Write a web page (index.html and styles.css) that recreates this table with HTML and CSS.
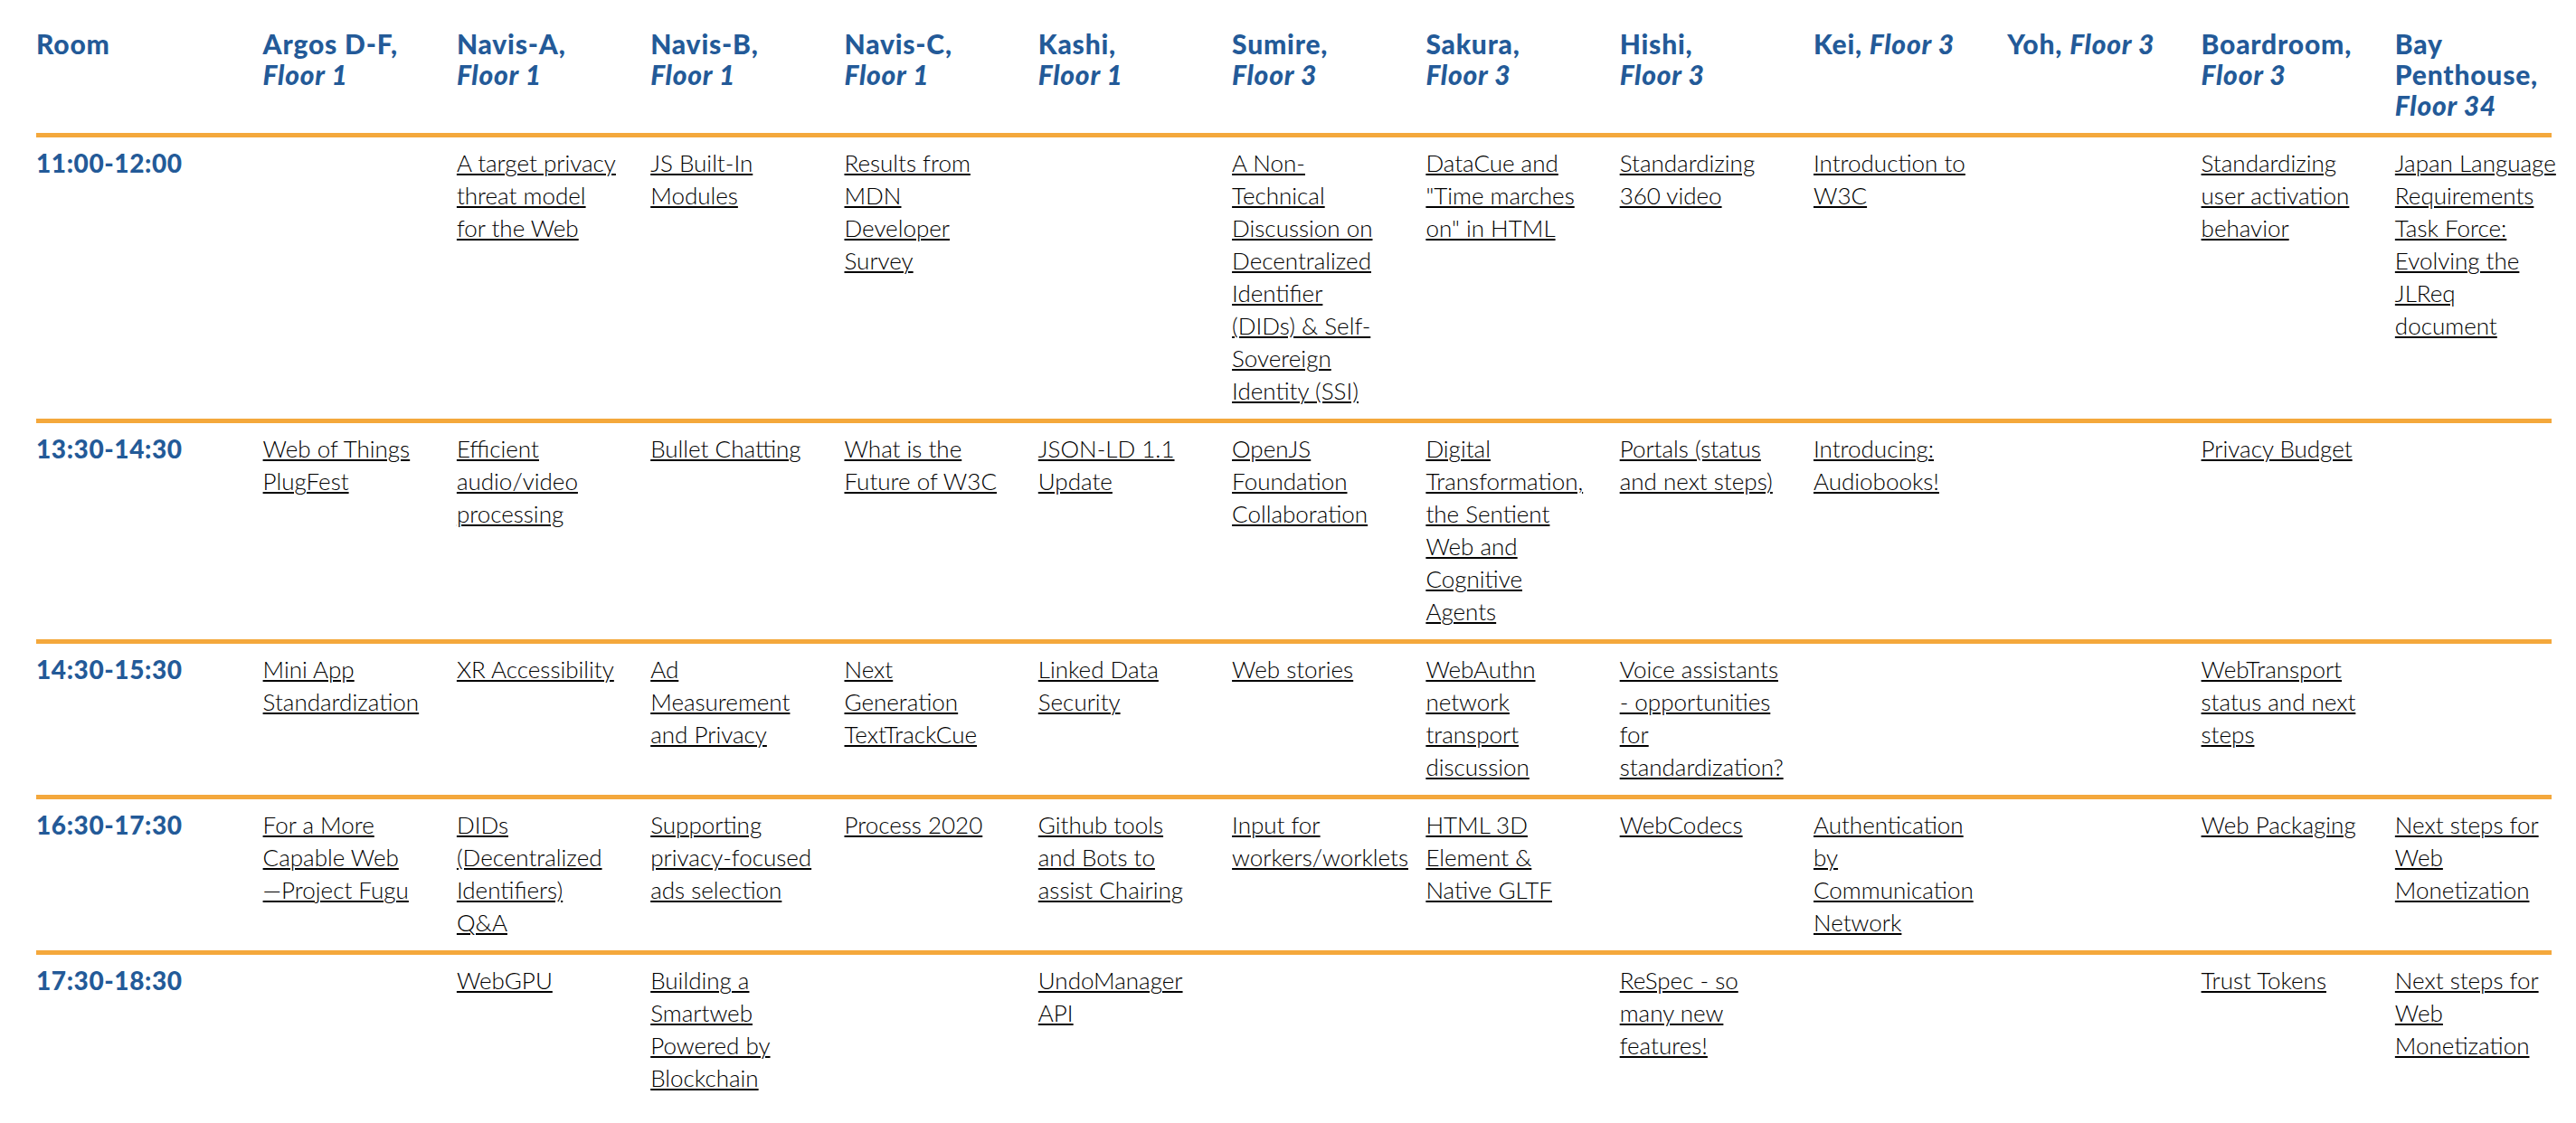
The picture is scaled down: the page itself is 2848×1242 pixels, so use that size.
FILE: index.html
```html
<!DOCTYPE html>
<html lang="en">
<head>
<meta charset="utf-8">
<title>Breakout sessions schedule</title>
<link rel="stylesheet" href="styles.css">
</head>
<body>
<main class="page">
<table class="schedule">
  <colgroup>
    <col class="col-room">
    <col class="col-slot"><col class="col-slot"><col class="col-slot"><col class="col-slot">
    <col class="col-slot"><col class="col-slot"><col class="col-slot"><col class="col-slot">
    <col class="col-slot"><col class="col-slot"><col class="col-slot">
    <col class="col-last">
  </colgroup>
  <thead>
    <tr>
      <th>Room</th>
      <th>Argos D-F, <em>Floor&nbsp;1</em></th>
      <th>Navis-A, <em>Floor&nbsp;1</em></th>
      <th>Navis-B, <em>Floor&nbsp;1</em></th>
      <th>Navis-C, <em>Floor&nbsp;1</em></th>
      <th>Kashi, <em>Floor&nbsp;1</em></th>
      <th>Sumire, <em>Floor&nbsp;3</em></th>
      <th>Sakura, <em>Floor&nbsp;3</em></th>
      <th>Hishi, <em>Floor&nbsp;3</em></th>
      <th>Kei, <em>Floor&nbsp;3</em></th>
      <th>Yoh, <em>Floor&nbsp;3</em></th>
      <th>Boardroom, <em>Floor&nbsp;3</em></th>
      <th>Bay Penthouse, <em>Floor&nbsp;34</em></th>
    </tr>
  </thead>
  <tbody>
    <tr>
      <th>11:00-12:00</th>
      <td></td>
      <td><a href="#">A target privacy threat model for the Web</a></td>
      <td><a href="#">JS Built-In Modules</a></td>
      <td><a href="#">Results from MDN Developer Survey</a></td>
      <td></td>
      <td><a href="#">A Non-Technical Discussion on Decentralized Identifier (DIDs)&nbsp;&amp; Self-Sovereign Identity (SSI)</a></td>
      <td><a href="#">DataCue and "Time marches on" in HTML</a></td>
      <td><a href="#">Standardizing 360 video</a></td>
      <td><a href="#">Introduction to W3C</a></td>
      <td></td>
      <td><a href="#">Standardizing user activation behavior</a></td>
      <td><a href="#">Japan&nbsp;Language Requirements Task Force: Evolving the JLReq document</a></td>
    </tr>
    <tr>
      <th>13:30-14:30</th>
      <td><a href="#">Web of Things PlugFest</a></td>
      <td><a href="#">Efficient audio/video processing</a></td>
      <td><a href="#">Bullet Chatting</a></td>
      <td><a href="#">What is the Future of W3C</a></td>
      <td><a href="#">JSON-LD 1.1 Update</a></td>
      <td><a href="#">OpenJS Foundation Collaboration</a></td>
      <td><a href="#">Digital Transformation, the Sentient Web and Cognitive Agents</a></td>
      <td><a href="#">Portals (status and next steps)</a></td>
      <td><a href="#">Introducing: Audiobooks!</a></td>
      <td></td>
      <td><a href="#">Privacy Budget</a></td>
      <td></td>
    </tr>
    <tr>
      <th>14:30-15:30</th>
      <td><a href="#">Mini App Standardization</a></td>
      <td><a href="#">XR Accessibility</a></td>
      <td><a href="#">Ad Measurement and Privacy</a></td>
      <td><a href="#">Next Generation TextTrackCue</a></td>
      <td><a href="#">Linked Data Security</a></td>
      <td><a href="#">Web stories</a></td>
      <td><a href="#">WebAuthn network transport discussion</a></td>
      <td><a href="#">Voice assistants - opportunities for standardization?</a></td>
      <td></td>
      <td></td>
      <td><a href="#">WebTransport status and next steps</a></td>
      <td></td>
    </tr>
    <tr>
      <th>16:30-17:30</th>
      <td><a href="#">For a More Capable Web<wbr>—&#8288;Project Fugu</a></td>
      <td><a href="#">DIDs (Decentralized Identifiers) Q&amp;A</a></td>
      <td><a href="#">Supporting privacy-focused ads selection</a></td>
      <td><a href="#">Process 2020</a></td>
      <td><a href="#">Github tools and Bots to assist Chairing</a></td>
      <td><a href="#">Input for workers/worklets</a></td>
      <td><a href="#">HTML 3D Element &amp; Native GLTF</a></td>
      <td><a href="#">WebCodecs</a></td>
      <td><a href="#">Authentication by Communication Network</a></td>
      <td></td>
      <td><a href="#">Web Packaging</a></td>
      <td><a href="#">Next steps for Web Monetization</a></td>
    </tr>
    <tr>
      <th>17:30-18:30</th>
      <td></td>
      <td><a href="#">WebGPU</a></td>
      <td><a href="#">Building a Smartweb Powered by Blockchain</a></td>
      <td></td>
      <td><a href="#">UndoManager API</a></td>
      <td></td>
      <td></td>
      <td><a href="#">ReSpec - so many new features!</a></td>
      <td></td>
      <td></td>
      <td><a href="#">Trust Tokens</a></td>
      <td><a href="#">Next steps for Web Monetization</a></td>
    </tr>
  </tbody>
</table>
</main>
</body>
</html>
```

FILE: styles.css
```css
html, body {
  margin: 0;
  padding: 0;
  background: #ffffff;
}

.page {
  padding: 17px 0 0 40px;
}

.schedule {
  width: 2781px;
  table-layout: fixed;
  border-collapse: collapse;
  font-family: "Lato", "Open Sans", sans-serif;
}

.col-room { width: 250.6px; }
.col-slot { width: 214.3px; }

.schedule th,
.schedule td {
  text-align: left;
  vertical-align: top;
  padding: 10px 34px 13px 0;
}

.schedule th:last-child,
.schedule td:last-child {
  padding-right: 0;
}

.schedule thead th {
  padding: 14px 34px 14px 0;
  font-size: 30px;
  line-height: 34px;
  font-weight: 900;
  letter-spacing: 0.8px;
  color: #235a98;
}

.schedule thead th:last-child {
  padding-right: 0;
}

.schedule thead em {
  font-style: italic;
}

.schedule tbody th {
  font-size: 28px;
  line-height: 36px;
  font-weight: 900;
  letter-spacing: 0.6px;
  color: #235a98;
}

.schedule tbody tr {
  border-top: 5px solid #f4a83c;
}

.schedule td {
  font-size: 26px;
  line-height: 36px;
  font-weight: 300;
  color: #000000;
}

.schedule a {
  color: #000000;
  text-decoration: underline;
  text-decoration-thickness: 1.5px;
  text-underline-offset: 2px;
}
```
